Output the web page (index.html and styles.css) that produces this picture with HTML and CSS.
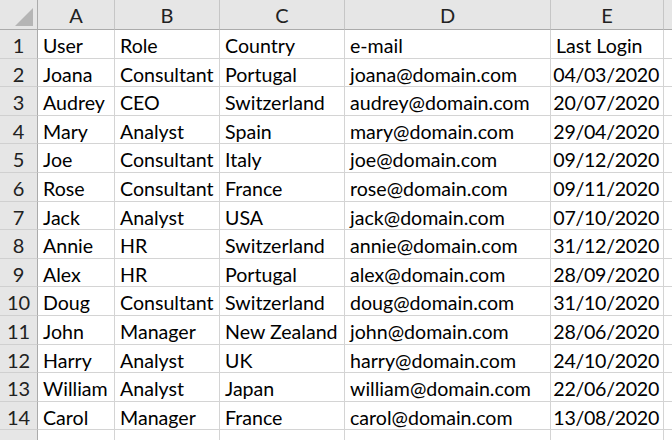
FILE: index.html
```html
<!DOCTYPE html>
<html>
<head>
<meta charset="utf-8">
<link rel="stylesheet" href="styles.css">
</head>
<body>
<div class="sheet">
  <div class="corner"><svg class="tri" width="20" height="20" viewBox="0 0 20 20"><polygon points="19,1 19,19 1,19" fill="#b5b5b5"/></svg></div>
  <div class="ch">A</div><div class="ch">B</div><div class="ch">C</div><div class="ch">D</div><div class="ch">E</div><div class="ch last"></div>

  <div class="rh">1</div><div class="c">User</div><div class="c">Role</div><div class="c">Country</div><div class="c">e-mail</div><div class="c">Last Login</div><div class="c"></div>
  <div class="rh">2</div><div class="c">Joana</div><div class="c">Consultant</div><div class="c">Portugal</div><div class="c">joana@domain.com</div><div class="c r">04/03/2020</div><div class="c"></div>
  <div class="rh">3</div><div class="c">Audrey</div><div class="c">CEO</div><div class="c">Switzerland</div><div class="c">audrey@domain.com</div><div class="c r">20/07/2020</div><div class="c"></div>
  <div class="rh">4</div><div class="c">Mary</div><div class="c">Analyst</div><div class="c">Spain</div><div class="c">mary@domain.com</div><div class="c r">29/04/2020</div><div class="c"></div>
  <div class="rh">5</div><div class="c">Joe</div><div class="c">Consultant</div><div class="c">Italy</div><div class="c">joe@domain.com</div><div class="c r">09/12/2020</div><div class="c"></div>
  <div class="rh">6</div><div class="c">Rose</div><div class="c">Consultant</div><div class="c">France</div><div class="c">rose@domain.com</div><div class="c r">09/11/2020</div><div class="c"></div>
  <div class="rh">7</div><div class="c">Jack</div><div class="c">Analyst</div><div class="c">USA</div><div class="c">jack@domain.com</div><div class="c r">07/10/2020</div><div class="c"></div>
  <div class="rh">8</div><div class="c">Annie</div><div class="c">HR</div><div class="c">Switzerland</div><div class="c">annie@domain.com</div><div class="c r">31/12/2020</div><div class="c"></div>
  <div class="rh">9</div><div class="c">Alex</div><div class="c">HR</div><div class="c">Portugal</div><div class="c">alex@domain.com</div><div class="c r">28/09/2020</div><div class="c"></div>
  <div class="rh">10</div><div class="c">Doug</div><div class="c">Consultant</div><div class="c">Switzerland</div><div class="c">doug@domain.com</div><div class="c r">31/10/2020</div><div class="c"></div>
  <div class="rh">11</div><div class="c">John</div><div class="c">Manager</div><div class="c">New Zealand</div><div class="c">john@domain.com</div><div class="c r">28/06/2020</div><div class="c"></div>
  <div class="rh">12</div><div class="c">Harry</div><div class="c">Analyst</div><div class="c">UK</div><div class="c">harry@domain.com</div><div class="c r">24/10/2020</div><div class="c"></div>
  <div class="rh">13</div><div class="c">William</div><div class="c">Analyst</div><div class="c">Japan</div><div class="c">william@domain.com</div><div class="c r">22/06/2020</div><div class="c"></div>
  <div class="rh">14</div><div class="c">Carol</div><div class="c">Manager</div><div class="c">France</div><div class="c">carol@domain.com</div><div class="c r">13/08/2020</div><div class="c"></div>
  <div class="rh"></div><div class="c"></div><div class="c"></div><div class="c"></div><div class="c"></div><div class="c"></div><div class="c"></div>
</div>
</body>
</html>
```
FILE: styles.css
```css
html, body {
  margin: 0;
  padding: 0;
  background: #ffffff;
  overflow: hidden;
}
.sheet {
  display: grid;
  grid-template-columns: 38px 77px 105px 125px 206px 113px 1fr;
  grid-template-rows: 30px repeat(15, 28.6px);
  width: 672px;
  height: 440px;
  overflow: hidden;
  font-family: Lato, "Open Sans", sans-serif;
  font-size: 19.6px;
  color: #000;
}
.corner {
  background: #e6e6e6;
  border-right: 1px solid #ababab;
  border-bottom: 1px solid #ababab;
  box-sizing: border-box;
  position: relative;
}
.tri {
  position: absolute;
  right: 3px;
  bottom: 2px;
}
.ch {
  background: #e6e6e6;
  border-right: 1px solid #c6c6c6;
  border-bottom: 1px solid #ababab;
  box-sizing: border-box;
  text-align: center;
  line-height: 30px;
  font-size: 20px;
  color: #222;
}
.ch.last {
  border-right: none;
}
.rh {
  background: #e6e6e6;
  border-right: 1px solid #ababab;
  border-bottom: 1px solid #d0d0d0;
  box-sizing: border-box;
  text-align: center;
  padding-top: 3px;
  line-height: 25px;
  font-size: 20px;
  color: #222;
}
.c {
  border-right: 1px solid #d4d4d4;
  border-bottom: 1px solid #d4d4d4;
  box-sizing: border-box;
  padding: 3px 4px 0 5px;
  line-height: 25px;
  white-space: nowrap;
  overflow: hidden;
}
.c.r {
  text-align: right;
  padding-left: 0;
  padding-right: 4px;
  letter-spacing: -0.3px;
}
```
